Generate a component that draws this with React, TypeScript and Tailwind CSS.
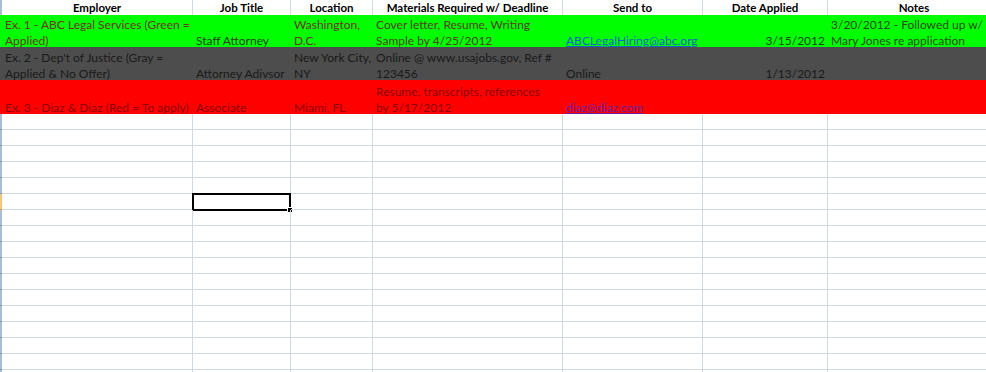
import React from 'react';

type Cell = {
  lines?: string[];
  color?: string;
  align?: 'left' | 'right';
  link?: boolean;
};

type Row = {
  height: string;
  bg: string;
  cells: Cell[];
};

// column widths include the 1px gridline on the right
const colWidths = ['w-[191px]', 'w-[98px]', 'w-[82px]', 'w-[190px]', 'w-[140px]', 'w-[125px]', 'w-[173px]'];

const headers = ['Employer', 'Job Title', 'Location', 'Materials Required w/ Deadline', 'Send to', 'Date Applied', 'Notes'];

const redText = 'text-[#6e3320]';
const darkOnGreen = 'text-[#1f421a]';

const rows: Row[] = [
  {
    height: 'h-[32px]',
    bg: 'bg-[#00ff00]',
    cells: [
      { lines: ['Ex. 1 - ABC Legal Services (Green =', 'Applied)'], color: redText },
      { lines: ['Staff Attorney'], color: darkOnGreen },
      { lines: ['Washington,', 'D.C.'], color: redText },
      { lines: ['Cover letter, Resume, Writing', 'Sample by 4/25/2012'], color: 'text-[#54401c]' },
      { lines: ['ABCLegalHiring@abc.org'], color: 'text-[#1763c9]', link: true },
      { lines: ['3/15/2012'], color: darkOnGreen, align: 'right' },
      { lines: ['3/20/2012 - Followed up w/', 'Mary Jones re application'], color: 'text-[#2c4a18]' },
    ],
  },
  {
    height: 'h-[33px]',
    bg: 'bg-[#4d4d4d]',
    cells: [
      { lines: ["Ex. 2 - Dep't of Justice (Gray =", 'Applied & No Offer)'] },
      { lines: ['Attorney Adivsor'] },
      { lines: ['New York City,', 'NY'] },
      { lines: ['Online @ www.usajobs.gov, Ref #', '123456'] },
      { lines: ['Online'] },
      { lines: ['1/13/2012'], align: 'right' },
      {},
    ].map((c) => ({ ...c, color: 'text-[#1a1a1a]' })) as Cell[],
  },
  {
    height: 'h-[34px]',
    bg: 'bg-[#ff0000]',
    cells: [
      { lines: ['Ex. 3 - Diaz & Diaz (Red = To apply)'] },
      { lines: ['Associate'] },
      { lines: ['Miami, FL'] },
      { lines: ['Resume, transcripts, references', 'by 5/17/2012'] },
      { lines: ['diaz@diaz.com'], link: true },
      {},
      {},
    ].map((c) => ({ ...c, color: c.link ? 'text-[#6a1fa3]' : 'text-[#8e0000]' })) as Cell[],
  },
];

const emptyRows = 17;
const activeRow = 5;

export default function App() {
  return (
    <div
      className="w-[986px] h-[372px] overflow-hidden bg-white text-[12px]"
      style={{ fontFamily: 'Lato, "Open Sans", sans-serif' }}
    >
      <div className="w-[1001px]">
        {/* header row */}
        <div className="flex h-[15px]">
          <div className="w-[2px] shrink-0 bg-[#a9bcd7]" />
          {headers.map((h, i) => (
            <div
              key={h}
              className={`${colWidths[i]} shrink-0 border-r border-[#d0d7e5] flex items-end justify-center font-bold text-[11.5px] leading-[15px] text-black whitespace-nowrap overflow-hidden`}
            >
              {h}
            </div>
          ))}
        </div>

        {/* filled rows */}
        {rows.map((row, r) => (
          <div key={r} className={`flex ${row.height} ${row.bg}`}>
            <div className="w-[2px] shrink-0" />
            {row.cells.map((cell, i) => (
              <div
                key={i}
                className={`${colWidths[i]} shrink-0 flex flex-col justify-end px-[3px] leading-[16px] whitespace-nowrap overflow-hidden ${cell.color ?? ''} ${cell.align === 'right' ? 'items-end' : 'items-start'}`}
              >
                {(cell.lines ?? []).map((l, k) => (
                  <span key={k} className={`translate-y-[2px] ${cell.link ? 'underline' : ''}`}>
                    {l}
                  </span>
                ))}
              </div>
            ))}
          </div>
        ))}

        {/* empty grid */}
        {Array.from({ length: emptyRows }).map((_, r) => (
          <div key={r} className="flex h-[16px]">
            <div
              className={`w-[2px] shrink-0 border-b ${r === activeRow ? 'bg-[#f7c47c] border-[#e3a24a]' : 'bg-[#a9bcd7] border-[#7d95b8]'}`}
            />
            {colWidths.map((w, i) => (
              <div key={i} className={`${w} shrink-0 border-r border-b border-[#d0d7e5] relative`}>
                {r === activeRow && i === 1 && (
                  <div className="absolute -left-[1px] -top-[1px] w-[99px] h-[18px] border-2 border-black">
                    <div className="absolute -right-[4px] -bottom-[4px] w-[6px] h-[6px] bg-black border border-white" />
                  </div>
                )}
              </div>
            ))}
          </div>
        ))}
      </div>
    </div>
  );
}
